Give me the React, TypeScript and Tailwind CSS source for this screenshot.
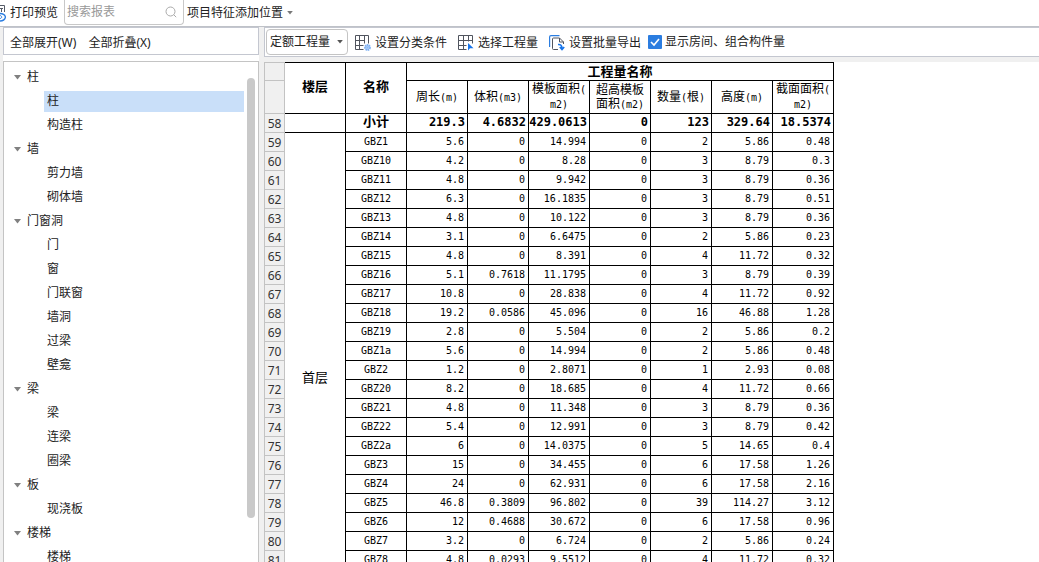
import React, { useState } from "react";

type Group = { name: string; items: string[] };

const groups: Group[] = [
  { name: "柱", items: ["柱", "构造柱"] },
  { name: "墙", items: ["剪力墙", "砌体墙"] },
  { name: "门窗洞", items: ["门", "窗", "门联窗", "墙洞", "过梁", "壁龛"] },
  { name: "梁", items: ["梁", "连梁", "圈梁"] },
  { name: "板", items: ["现浇板"] },
  { name: "楼梯", items: ["楼梯"] },
];

const columns = ["周长(m)", "体积(m3)", "模板面积(\nm2)", "超高模板\n面积(m2)", "数量(根)", "高度(m)", "截面面积(\nm2)"];
const totals = ["219.3", "4.6832", "429.0613", "0", "123", "329.64", "18.5374"];

const rows: string[][] = [
  ["GBZ1", "5.6", "0", "14.994", "0", "2", "5.86", "0.48"],
  ["GBZ10", "4.2", "0", "8.28", "0", "3", "8.79", "0.3"],
  ["GBZ11", "4.8", "0", "9.942", "0", "3", "8.79", "0.36"],
  ["GBZ12", "6.3", "0", "16.1835", "0", "3", "8.79", "0.51"],
  ["GBZ13", "4.8", "0", "10.122", "0", "3", "8.79", "0.36"],
  ["GBZ14", "3.1", "0", "6.6475", "0", "2", "5.86", "0.23"],
  ["GBZ15", "4.8", "0", "8.391", "0", "4", "11.72", "0.32"],
  ["GBZ16", "5.1", "0.7618", "11.1795", "0", "3", "8.79", "0.39"],
  ["GBZ17", "10.8", "0", "28.838", "0", "4", "11.72", "0.92"],
  ["GBZ18", "19.2", "0.0586", "45.096", "0", "16", "46.88", "1.28"],
  ["GBZ19", "2.8", "0", "5.504", "0", "2", "5.86", "0.2"],
  ["GBZ1a", "5.6", "0", "14.994", "0", "2", "5.86", "0.48"],
  ["GBZ2", "1.2", "0", "2.8071", "0", "1", "2.93", "0.08"],
  ["GBZ20", "8.2", "0", "18.685", "0", "4", "11.72", "0.66"],
  ["GBZ21", "4.8", "0", "11.348", "0", "3", "8.79", "0.36"],
  ["GBZ22", "5.4", "0", "12.991", "0", "3", "8.79", "0.42"],
  ["GBZ2a", "6", "0", "14.0375", "0", "5", "14.65", "0.4"],
  ["GBZ3", "15", "0", "34.455", "0", "6", "17.58", "1.26"],
  ["GBZ4", "24", "0", "62.931", "0", "6", "17.58", "2.16"],
  ["GBZ5", "46.8", "0.3809", "96.802", "0", "39", "114.27", "3.12"],
  ["GBZ6", "12", "0.4688", "30.672", "0", "6", "17.58", "0.96"],
  ["GBZ7", "3.2", "0", "6.724", "0", "2", "5.86", "0.24"],
  ["GBZ8", "4.8", "0.0293", "9.5512", "0", "4", "11.72", "0.32"],
];

const rowHead = "w-[21px] border-x border-b border-[#c3c3c3] bg-[#f0f0f0] p-0 pt-0.5 text-center font-['Noto_Sans'] text-xs leading-3 font-normal text-[#333]";
const cell = "w-[61px] border-r border-b border-black p-0";
const headText = "pb-0.5 text-[13px] leading-4 font-bold";
const smallHead = "text-xs leading-[14px] font-normal whitespace-pre";
const mono = "font-['DejaVu_Sans_Mono','Noto_Sans_CJK_SC',monospace]";

function Caret({ className }: { className: string }) {
  return (
    <svg className={className} viewBox="0 0 7 5" aria-hidden="true">
      <path d="M0 0h7L3.5 4.5z" fill="currentColor" />
    </svg>
  );
}

function PreviewIcon() {
  return (
    <svg className="h-[18px] w-1.5" viewBox="0 0 6 18" fill="none" aria-hidden="true">
      <path d="M0 1.5h4.5V8M0 4.5h3M1.5 4.5V8" stroke="#555b66" />
      <path d="M0 9.5c3 0 5 1.5 5.5 3.500C5 15.500 3 17 0 17" stroke="#2b7de0" strokeWidth="1.3" />
      <path d="M0 11.500c2 .2 2.500 2.800 0 3" stroke="#2b7de0" />
    </svg>
  );
}

function ClassifyIcon() {
  return (
    <svg className="h-4 w-4" viewBox="0 0 16 16" fill="none" aria-hidden="true">
      <path d="M8.5 14.5h-8V.5h13v8M4.5.5v14M9.5.5v8M.5 5.500h9M.5 10.500h8" stroke="#50545e" />
      <circle cx="12.5" cy="12.5" r="2.400" fill="#b9d6fa" stroke="#7db0f3" strokeWidth="2" strokeDasharray="1.400 .5" />
      <circle cx="12.5" cy="12.5" r="1" fill="#8dbaf5" />
    </svg>
  );
}

function SelectIcon() {
  return (
    <svg className="h-4 w-4" viewBox="0 0 16 16" fill="none" aria-hidden="true">
      <path d="M8.5 14.5h-8V.5h14v8M5.5.5v14M10.5.5v6M.5 5.5h14M.5 10.5h8" stroke="#50545e" />
      <path d="M10 8v7.500l2-2.300H15.500z" fill="#1674ea" />
    </svg>
  );
}

function ExportIcon() {
  return (
    <svg className="h-4 w-4" viewBox="0 0 16 16" fill="none" aria-hidden="true">
      <path d="M.6 12V2Q.6.6 2 .6h8.500" stroke="#2b7de0" strokeWidth="1.2" />
      <path d="M9 14.5H4.5q-1 0-1-1V4q0-1 1-1h6l4 4v2M10.5 3v4h4" stroke="#50545e" />
      <path d="M9 9.500q4-.5 4 4M10.800 12l2.200 2.500 2.200-2.500" stroke="#1674ea" strokeWidth="1.6" />
    </svg>
  );
}

function ToolButton({ icon, label }: { icon: React.ReactNode; label: string }) {
  return (
    <button type="button" className="flex items-center gap-1 whitespace-nowrap">
      {icon}
      {label}
    </button>
  );
}

export default function App() {
  const [selected, setSelected] = useState("柱/柱");
  const [closed, setClosed] = useState<string[]>([]);
  const [showRooms, setShowRooms] = useState(true);

  const toggle = (name: string) =>
    setClosed((c) => (c.includes(name) ? c.filter((n) => n !== name) : [...c, name]));

  return (
    <div className="flex h-screen flex-col overflow-hidden bg-[#f0f0f0] font-['Noto_Sans','Noto_Sans_CJK_SC',sans-serif] text-xs text-[#222]">
      <header className="flex h-[26px] shrink-0 items-center bg-white">
        <button type="button" className="flex items-center gap-1 whitespace-nowrap">
          <PreviewIcon />
          打印预览
        </button>
        <label className="ml-1.5 flex h-[25px] w-[120px] items-center self-start rounded-b border border-t-0 border-[#c8c8c8] px-0.5">
          <input aria-label="搜索报表" placeholder="搜索报表" className="w-0 grow outline-none placeholder:text-[#999]" />
          <svg className="mr-1 h-3 w-3" viewBox="0 0 12 12" fill="none" stroke="#aaa" aria-hidden="true">
            <circle cx="5.5" cy="5.5" r="4.500" />
            <path d="M8.700 8.700l2.500 2.500" />
          </svg>
        </label>
        <button type="button" className="ml-[3px] flex items-center gap-1 whitespace-nowrap">
          项目特征添加位置
          <Caret className="h-1 w-1.5 text-[#777]" />
        </button>
      </header>

      <div className="flex min-h-0 grow gap-1 border-t border-[#bfc2c8] pl-[3px]">
        <aside className="flex w-64 shrink-0 flex-col bg-white">
          <div className="mb-1.5 flex h-7 shrink-0 items-center gap-3 border border-[#c4c7d0] px-1.5 pt-1">
            <button type="button">全部展开(W)</button>
            <button type="button">全部折叠(X)</button>
          </div>
          <div className="flex min-h-0 grow justify-between overflow-hidden border-x border-t border-[#c4c4c4] pt-[3px] pr-[3px]">
            <ul className="w-60">
              {groups.map((g) => (
                <li key={g.name}>
                  <button type="button" onClick={() => toggle(g.name)} className="flex h-6 w-full items-center gap-1.5 pl-2.5">
                    <Caret className="h-[5px] w-[7px] text-[#808080]" />
                    {g.name}
                  </button>
                  {!closed.includes(g.name) && (
                    <ul className="pl-10">
                      {g.items.map((item) => {
                        const id = `${g.name}/${item}`;
                        return (
                          <li key={id} className="flex h-6 items-center">
                            <button
                              type="button"
                              onClick={() => setSelected(id)}
                              className={`h-[21px] w-full pl-[3px] text-left ${selected === id ? "bg-[#c9dff9]" : ""}`}
                            >
                              {item}
                            </button>
                          </li>
                        );
                      })}
                    </ul>
                  )}
                </li>
              ))}
            </ul>
            <div className="mt-[13px] h-[440px] w-2 rounded-full bg-[#c9c9c9]" />
          </div>
        </aside>

        <main className="flex min-w-0 grow flex-col pl-px">
          <div className="mb-[5px] flex h-[30px] shrink-0 items-center gap-[7px] border border-r-0 border-[#c4c7d0] bg-white">
            <div className="ml-px flex h-[26px] w-[82px] items-center rounded border border-[#c4c4c4] pr-1 pl-[3px]">
              <select aria-label="工程量类型" className="w-0 grow appearance-none bg-transparent outline-none">
                <option>定额工程量</option>
              </select>
              <Caret className="h-1 w-1.5 text-[#555]" />
            </div>
            <div className="flex items-center gap-[11px] pt-0.5">
              <ToolButton icon={<ClassifyIcon />} label="设置分类条件" />
              <ToolButton icon={<SelectIcon />} label="选择工程量" />
              <ToolButton icon={<ExportIcon />} label="设置批量导出" />
            </div>
            <label className="flex items-center gap-[3px] whitespace-nowrap">
              <span className="grid h-3.5 w-3.5 place-items-center rounded-[1px] bg-[#2b7de0]">
                <input
                  type="checkbox"
                  checked={showRooms}
                  onChange={(e) => setShowRooms(e.target.checked)}
                  className="peer col-start-1 row-start-1 h-3.5 w-3.5 appearance-none"
                />
                <svg className="pointer-events-none invisible col-start-1 row-start-1 h-3 w-3 peer-checked:visible" viewBox="0 0 12 12" fill="none" aria-hidden="true">
                  <path d="M2 6l3 3 5-6" stroke="white" strokeWidth="1.6" />
                </svg>
              </span>
              显示房间、组合构件量
            </label>
          </div>

          <div className="min-h-0 grow overflow-hidden bg-white">
            <table className={`w-[570px] table-fixed border-separate border-spacing-0 text-black ${mono}`}>
              <colgroup>
                <col className="w-[21px]" />
                {Array.from({ length: 9 }, (_, i) => (
                  <col key={i} className="w-[61px]" />
                ))}
              </colgroup>
              <thead>
                <tr className="h-[19px]">
                  <th className={`${rowHead} border-t`} />
                  <th rowSpan={2} className={`${cell} ${headText} border-t`}>楼层</th>
                  <th rowSpan={2} className={`${cell} ${headText} border-t`}>名称</th>
                  <th colSpan={7} className={`${cell} border-t text-[13px] leading-4 font-bold`}>工程量名称</th>
                </tr>
                <tr className="h-[33px]">
                  <th className={rowHead} />
                  {columns.map((c) => (
                    <th key={c} className={`${cell} ${smallHead}`}>
                      {c.split(/([a-z()][a-z0-9()]*)/).map((part, i) =>
                        i % 2 ? <span key={i} className="text-[10px]">{part}</span> : part
                      )}
                    </th>
                  ))}
                </tr>
              </thead>
              <tbody>
                <tr className="h-[19px]">
                  <th className={rowHead}>58</th>
                  <td className={cell} />
                  <th className={`${cell} ${headText}`}>小计</th>
                  {totals.map((t, i) => (
                    <td key={i} className={`${cell} pr-0.5 pb-0.5 text-right text-xs leading-4 font-bold`}>{t}</td>
                  ))}
                </tr>
                {rows.map((r, i) => (
                  <tr key={r[0]} className="h-[19px]">
                    <th className={rowHead}>{59 + i}</th>
                    {i === 0 && (
                      <td rowSpan={rows.length} className={`${cell} pt-[54px] text-center text-[13px] leading-4`}>首层</td>
                    )}
                    {r.map((v, j) => (
                      <td key={j} className={`${cell} text-[10px] leading-4 ${j === 0 ? "text-center" : "pr-[3px] text-right"}`}>
                        {v}
                      </td>
                    ))}
                  </tr>
                ))}
              </tbody>
            </table>
          </div>
        </main>
      </div>
    </div>
  );
}
